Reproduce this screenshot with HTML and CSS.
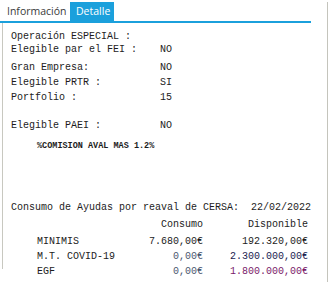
FILE: index.html
```html
<!DOCTYPE html>
<html lang="es">
<head>
  <meta charset="UTF-8" />
  <title>Detalle</title>
  <link rel="stylesheet" href="styles.css">
</head>
<body>
  <div class="frame">
    <div class="main">
      <div class="tabs">
        <div class="tab">Información</div>
        <div class="tab active">Detalle</div>
      </div>

      <div class="content">
        <div class="group tight">
          <div class="row"><span class="label">Operación ESPECIAL :</span></div>
          <div class="row"><span class="label">Elegible par el FEI :</span><span class="value">NO</span></div>
        </div>

        <div class="group first">
          <div class="row"><span class="label">Gran Empresa:</span><span class="value">NO</span></div>
          <div class="row"><span class="label">Elegible PRTR :</span><span class="value">SI</span></div>
          <div class="row"><span class="label">Portfolio :</span><span class="value">15</span></div>
        </div>

        <div class="group paei">
          <div class="row"><span class="label">Elegible PAEI :</span><span class="value">NO</span></div>
        </div>

        <div class="note">%COMISION AVAL MAS 1.2%</div>

        <div class="consumo-title">Consumo de Ayudas por reaval de CERSA:  22/02/2022</div>

        <div class="ayudas">
          <div class="ayuda head">
            <span></span>
            <span class="num">Consumo</span>
            <span class="num">Disponible</span>
          </div>
          <div class="ayuda">
            <span>MINIMIS</span>
            <span class="num">7.680,00€</span>
            <span class="num">192.320,00€</span>
          </div>
          <div class="ayuda">
            <span>M.T. COVID-19</span>
            <span class="num zero">0,00€</span>
            <span class="num navy">2.300.000,00€</span>
          </div>
          <div class="ayuda">
            <span>EGF</span>
            <span class="num zero">0,00€</span>
            <span class="num purple">1.800.000,00€</span>
          </div>
        </div>
      </div>
    </div>
  </div>
</body>
</html>
```

FILE: styles.css
```css
* {
  box-sizing: border-box;
}

body {
  margin: 0;
  background: #fff;
  font-family: "Liberation Mono", "Courier New", monospace;
  font-size: 10px;
  color: #1c1c1c;
}

/* outer frame, grey rule on the right */
.frame {
  width: 328px;
  height: 280px;
  margin-top: 2px;
  border-right: 1px solid #c4c4bc;
}

.main {
  width: 311px;
}

/* Tab strip */
.tabs {
  display: flex;
  padding-left: 3px;
  height: 21px;
  border-bottom: 2px solid #1ba0dc;
}

.tab {
  width: 67px;
  height: 19px;
  padding: 0 4px;
  font-family: "Open Sans", "Noto Sans", sans-serif;
  font-size: 10.5px;
  line-height: 19px;
  color: #3a3a3a;
}

.tab.active {
  width: 44px;
  padding: 0 6px;
  background: #1ba0dc;
  color: #fff;
}

/* Panel body */
.content {
  height: 246px;
  margin-left: 2px;
  padding: 7px 0 0 8px;
  border-left: 1px solid #c8c8c0;
}

.row {
  display: grid;
  grid-template-columns: 149px auto;
  line-height: 15px;
  white-space: pre;
}

.tight .row {
  line-height: 13px;
}

.group.first {
  margin-top: 4px;
}

.group.paei {
  margin-top: 13px;
}

.note {
  margin: 6px 0 0 26px;
  font-size: 8.5px;
  font-weight: bold;
  line-height: 15px;
  white-space: pre;
}

.consumo-title {
  margin-top: 46px;
  line-height: 15px;
  white-space: pre;
}

/* Consumo / Disponible table */
.ayudas {
  margin: 2px 0 0 26px;
}

.ayuda {
  display: grid;
  grid-template-columns: 100px 66px 105px;
  line-height: 15px;
  white-space: pre;
}

.ayuda.head {
  margin-bottom: 2px;
}

.num {
  text-align: right;
}

.zero {
  color: #4a5670;
}

.navy {
  color: #1a2350;
}

.purple {
  color: #7a1a6a;
}
```
